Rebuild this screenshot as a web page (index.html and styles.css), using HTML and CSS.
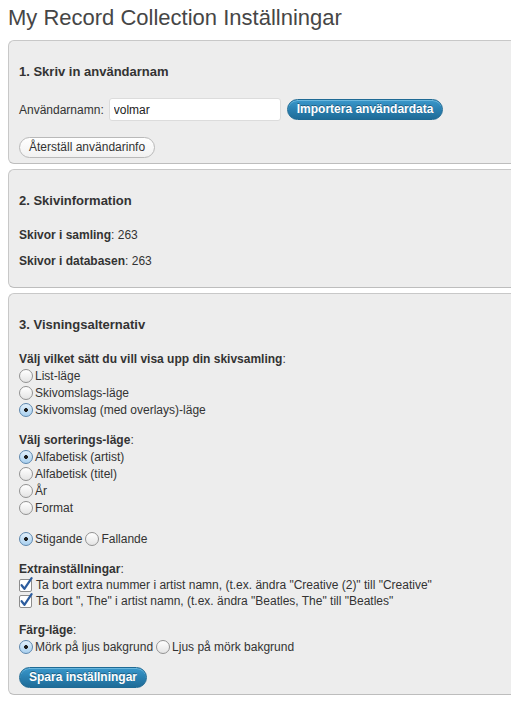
FILE: index.html
```html
<!DOCTYPE html>
<html lang="sv">
<head>
<meta charset="utf-8">
<title>My Record Collection Inställningar</title>
<link rel="stylesheet" href="styles.css">
</head>
<body>
<div class="wrap">
  <h2 class="title">My Record Collection Inställningar</h2>

  <div class="panel p1">
    <h3>1. Skriv in användarnam</h3>
    <div class="userrow">
      <label class="ulabel" for="user">Användarnamn:</label>
      <input class="text" id="user" type="text" value="volmar">
      <button class="btn primary" type="button">Importera användardata</button>
    </div>
    <div class="resetrow">
      <button class="btn secondary" type="button">Återställ användarinfo</button>
    </div>
  </div>

  <div class="panel p2">
    <h3>2. Skivinformation</h3>
    <p class="stat first"><b>Skivor i samling</b>: 263</p>
    <p class="stat"><b>Skivor i databasen</b>: 263</p>
  </div>

  <div class="panel p3">
    <h3>3. Visningsalternativ</h3>

    <div class="group g1">
      <div class="glabel"><b>Välj vilket sätt du vill visa upp din skivsamling</b>:</div>
      <label class="opt"><input type="radio" name="view"><span>List-läge</span></label>
      <label class="opt"><input type="radio" name="view"><span>Skivomslags-läge</span></label>
      <label class="opt"><input type="radio" name="view" checked><span>Skivomslag (med overlays)-läge</span></label>
    </div>

    <div class="group">
      <div class="glabel"><b>Välj sorterings-läge</b>:</div>
      <label class="opt"><input type="radio" name="sort" checked><span>Alfabetisk (artist)</span></label>
      <label class="opt"><input type="radio" name="sort"><span>Alfabetisk (titel)</span></label>
      <label class="opt"><input type="radio" name="sort"><span>År</span></label>
      <label class="opt"><input type="radio" name="sort"><span>Format</span></label>
    </div>

    <div class="group inline">
      <label class="opt"><input type="radio" name="order" checked><span>Stigande</span></label>
      <label class="opt"><input type="radio" name="order"><span>Fallande</span></label>
    </div>

    <div class="group">
      <div class="glabel"><b>Extrainställningar</b>:</div>
      <label class="opt chk"><svg class="cb" width="15" height="16" viewBox="0 0 15 16"><rect x="0.5" y="3.5" width="12" height="12" rx="1.5" fill="#fff" stroke="#8c8c8c"/><path d="M2.6 9.2 L5.4 12.8 L12.6 2.2" fill="none" stroke="#2c5c9e" stroke-width="2.2" stroke-linecap="round" stroke-linejoin="round"/></svg><span>Ta bort extra nummer i artist namn, (t.ex. ändra "Creative (2)" till "Creative"</span></label>
      <label class="opt chk"><svg class="cb" width="15" height="16" viewBox="0 0 15 16"><rect x="0.5" y="3.5" width="12" height="12" rx="1.5" fill="#fff" stroke="#8c8c8c"/><path d="M2.6 9.2 L5.4 12.8 L12.6 2.2" fill="none" stroke="#2c5c9e" stroke-width="2.2" stroke-linecap="round" stroke-linejoin="round"/></svg><span>Ta bort ", The" i artist namn, (t.ex. ändra "Beatles, The" till "Beatles"</span></label>
    </div>

    <div class="group g5">
      <div class="glabel"><b>Färg-läge</b>:</div>
      <div class="inline">
        <label class="opt"><input type="radio" name="color" checked><span>Mörk på ljus bakgrund</span></label>
        <label class="opt"><input type="radio" name="color"><span>Ljus på mörk bakgrund</span></label>
      </div>
    </div>

    <div class="saverow">
      <button class="btn primary" type="button">Spara inställningar</button>
    </div>
  </div>
</div>
</body>
</html>
```

FILE: styles.css
```css
html {
  overflow: hidden;
}

body {
  margin: 0 0 0 8px;
  background: #fff;
  color: #333;
  font-family: "Liberation Sans", Arial, Helvetica, sans-serif;
  font-size: 12px;
}

.title {
  margin: 3px 0 8px;
  font-size: 22px;
  line-height: 29px;
  font-weight: normal;
  color: #464646;
}

/* panels run off the right edge of the window: no right border visible */
.panel {
  background: #ededed;
  border: 1px solid #c8c8c8;
  border-right: 0;
  border-bottom-color: #bdbdbd;
  border-radius: 6px 0 0 6px;
  padding: 0 10px;
  margin-bottom: 5px;
}

.panel h3 {
  margin: 22px 0 0;
  font-size: 13px;
  line-height: 17px;
  font-weight: bold;
  color: #333;
}

/* panel 1 */
.p1 {
  padding-bottom: 5px;
}

.userrow {
  margin-top: 18px;
  display: flex;
  align-items: center;
  height: 23px;
}

.ulabel {
  margin-right: 5px;
}

.text {
  box-sizing: border-box;
  width: 172px;
  height: 23px;
  border: 1px solid #dcdcdc;
  border-radius: 3px;
  background: #fff;
  padding: 0 4px;
  margin: 0 6px 0 0;
  font-family: inherit;
  font-size: 12px;
  color: #222;
  outline: none;
}

.resetrow {
  margin-top: 16px;
  display: flex;
}

.btn {
  box-sizing: border-box;
  height: 21px;
  padding: 0 9px;
  border-radius: 11px;
  font-family: inherit;
  font-size: 12px;
  line-height: 19px;
  cursor: pointer;
  margin: 0;
}

.primary {
  background: linear-gradient(#3a98cb, #2a80b1 50%, #1f6c98);
  border: 1px solid #1f6a94;
  color: #fff;
  font-weight: bold;
  text-shadow: 0 -1px 0 rgba(0, 0, 0, 0.35);
  box-shadow: inset 0 1px 0 rgba(140, 205, 235, 0.6);
}

.secondary {
  background: linear-gradient(#ffffff, #f1f1f1);
  border: 1px solid #b9b9b9;
  color: #333;
  font-weight: normal;
  height: 21px;
}

/* panel 2 */
.p2 {
  padding-bottom: 18px;
}

.stat {
  margin: 10px 0 0;
  line-height: 16px;
}

.stat.first {
  margin-top: 18px;
}

/* panel 3 */
.p3 {
  padding-bottom: 6px;
}

.group {
  margin-top: 14px;
}

.group.g1 {
  margin-top: 18px;
}

.group.g5 {
  margin-top: 13px;
}

.glabel {
  line-height: 16px;
}

.opt {
  display: flex;
  align-items: center;
  height: 17px;
  cursor: pointer;
}

.opt.chk {
  height: 16px;
}

.inline {
  display: flex;
}

.inline .opt {
  margin-right: 3px;
}

.opt input[type="radio"] {
  appearance: none;
  -webkit-appearance: none;
  box-sizing: border-box;
  width: 14px;
  height: 14px;
  margin: 0 2px 0 0;
  border: 1px solid #929292;
  border-radius: 50%;
  background: linear-gradient(#ffffff, #e4e4e4);
  flex: none;
}

.opt input[type="radio"]:checked {
  border-color: #5d87ae;
  background:
    radial-gradient(circle, #1e1e1e 0 1.6px, rgba(0, 0, 0, 0) 2.2px),
    linear-gradient(#e2f0fb, #a9d0ef);
}

.cb {
  flex: none;
  margin: -3px 2px 0 0;
  overflow: visible;
}

.saverow {
  margin-top: 12px;
  display: flex;
}
```
